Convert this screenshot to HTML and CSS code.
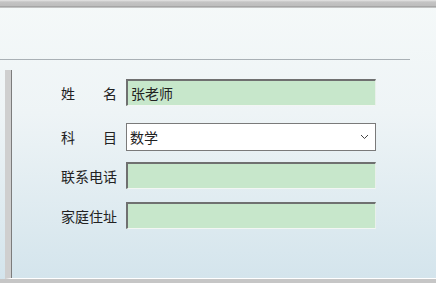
FILE: index.html
```html
<!DOCTYPE html>
<html lang="zh-CN">
<head>
  <meta charset="UTF-8">
  <title>教师信息</title>
  <link rel="stylesheet" href="styles.css">
</head>
<body>
  <div class="window">
    <div class="topbar"></div>
    <div class="header"></div>

    <!-- 表单区域 -->
    <div class="panel">
      <div class="form">
        <div class="row row-name">
          <label class="label spread"><span>姓</span><span>名</span></label>
          <div class="field green">张老师</div>
        </div>
        <div class="row row-subject">
          <label class="label spread"><span>科</span><span>目</span></label>
          <div class="field select">
            <span>数学</span>
            <svg class="arrow" width="9" height="6" viewBox="0 0 9 6">
              <path d="M1 1 L4.5 4.5 L8 1" fill="none" stroke="#444" stroke-width="1"/>
            </svg>
          </div>
        </div>
        <div class="row row-phone">
          <label class="label">联系电话</label>
          <div class="field green"></div>
        </div>
        <div class="row row-addr">
          <label class="label">家庭住址</label>
          <div class="field green"></div>
        </div>
      </div>
    </div>
    <div class="bottombar"></div>
  </div>
</body>
</html>
```
FILE: styles.css
```css
body {
  margin: 0;
  font-family: "Noto Sans CJK SC", "Noto Sans", sans-serif;
  font-size: 14px;
  color: #222;
  overflow: hidden;
}

.window {
  width: 436px;
  height: 283px;
  display: flex;
  flex-direction: column;
  background: linear-gradient(to bottom, #f5f9f9 0%, #eef4f6 40%, #d3e4ec 100%);
}

.topbar {
  height: 8px;
  flex-shrink: 0;
  background: linear-gradient(to bottom, #e6e6e6 0, #c4c4c4 2px, #bdbdbd 6px, #8f8f8f 7px, #f2f6f6 8px);
}

.header {
  height: 51px;
  width: 410px;
  border-bottom: 1px solid #a9b0b5;
  flex-shrink: 0;
}

.panel {
  flex: 1;
  margin-top: 10px;
  margin-left: 5px;
  border-left: 6px solid #cfcfcf;
  box-shadow: inset 1px 0 0 #7c7c7c;
  border-bottom: 1px solid #ffffff;
}

.form {
  padding: 9px 0 0 50px;
  display: flex;
  flex-direction: column;
}

.row {
  display: flex;
  align-items: center;
  gap: 9px;
}

.row-subject { margin-top: 17px; }
.row-phone { margin-top: 11px; }
.row-addr { margin-top: 13px; }

.label {
  width: 56px;
  line-height: 20px;
}

.spread {
  display: flex;
  justify-content: space-between;
}

.field {
  box-sizing: border-box;
  width: 250px;
  height: 27px;
  line-height: 24px;
  padding-left: 3px;
}

.green {
  background: #c7e7cb;
  border-top: 2px solid #6f7070;
  border-left: 2px solid #6f7070;
  border-right: 1px solid #e8f0ea;
  border-bottom: 1px solid #f2f6f3;
}

.select {
  height: 28px;
  background: #fff;
  border: 1px solid #7a7a7a;
  display: flex;
  align-items: center;
  justify-content: space-between;
  padding-right: 6px;
}

.bottombar {
  height: 4px;
  flex-shrink: 0;
  background: #c6c6c6;
}
```
